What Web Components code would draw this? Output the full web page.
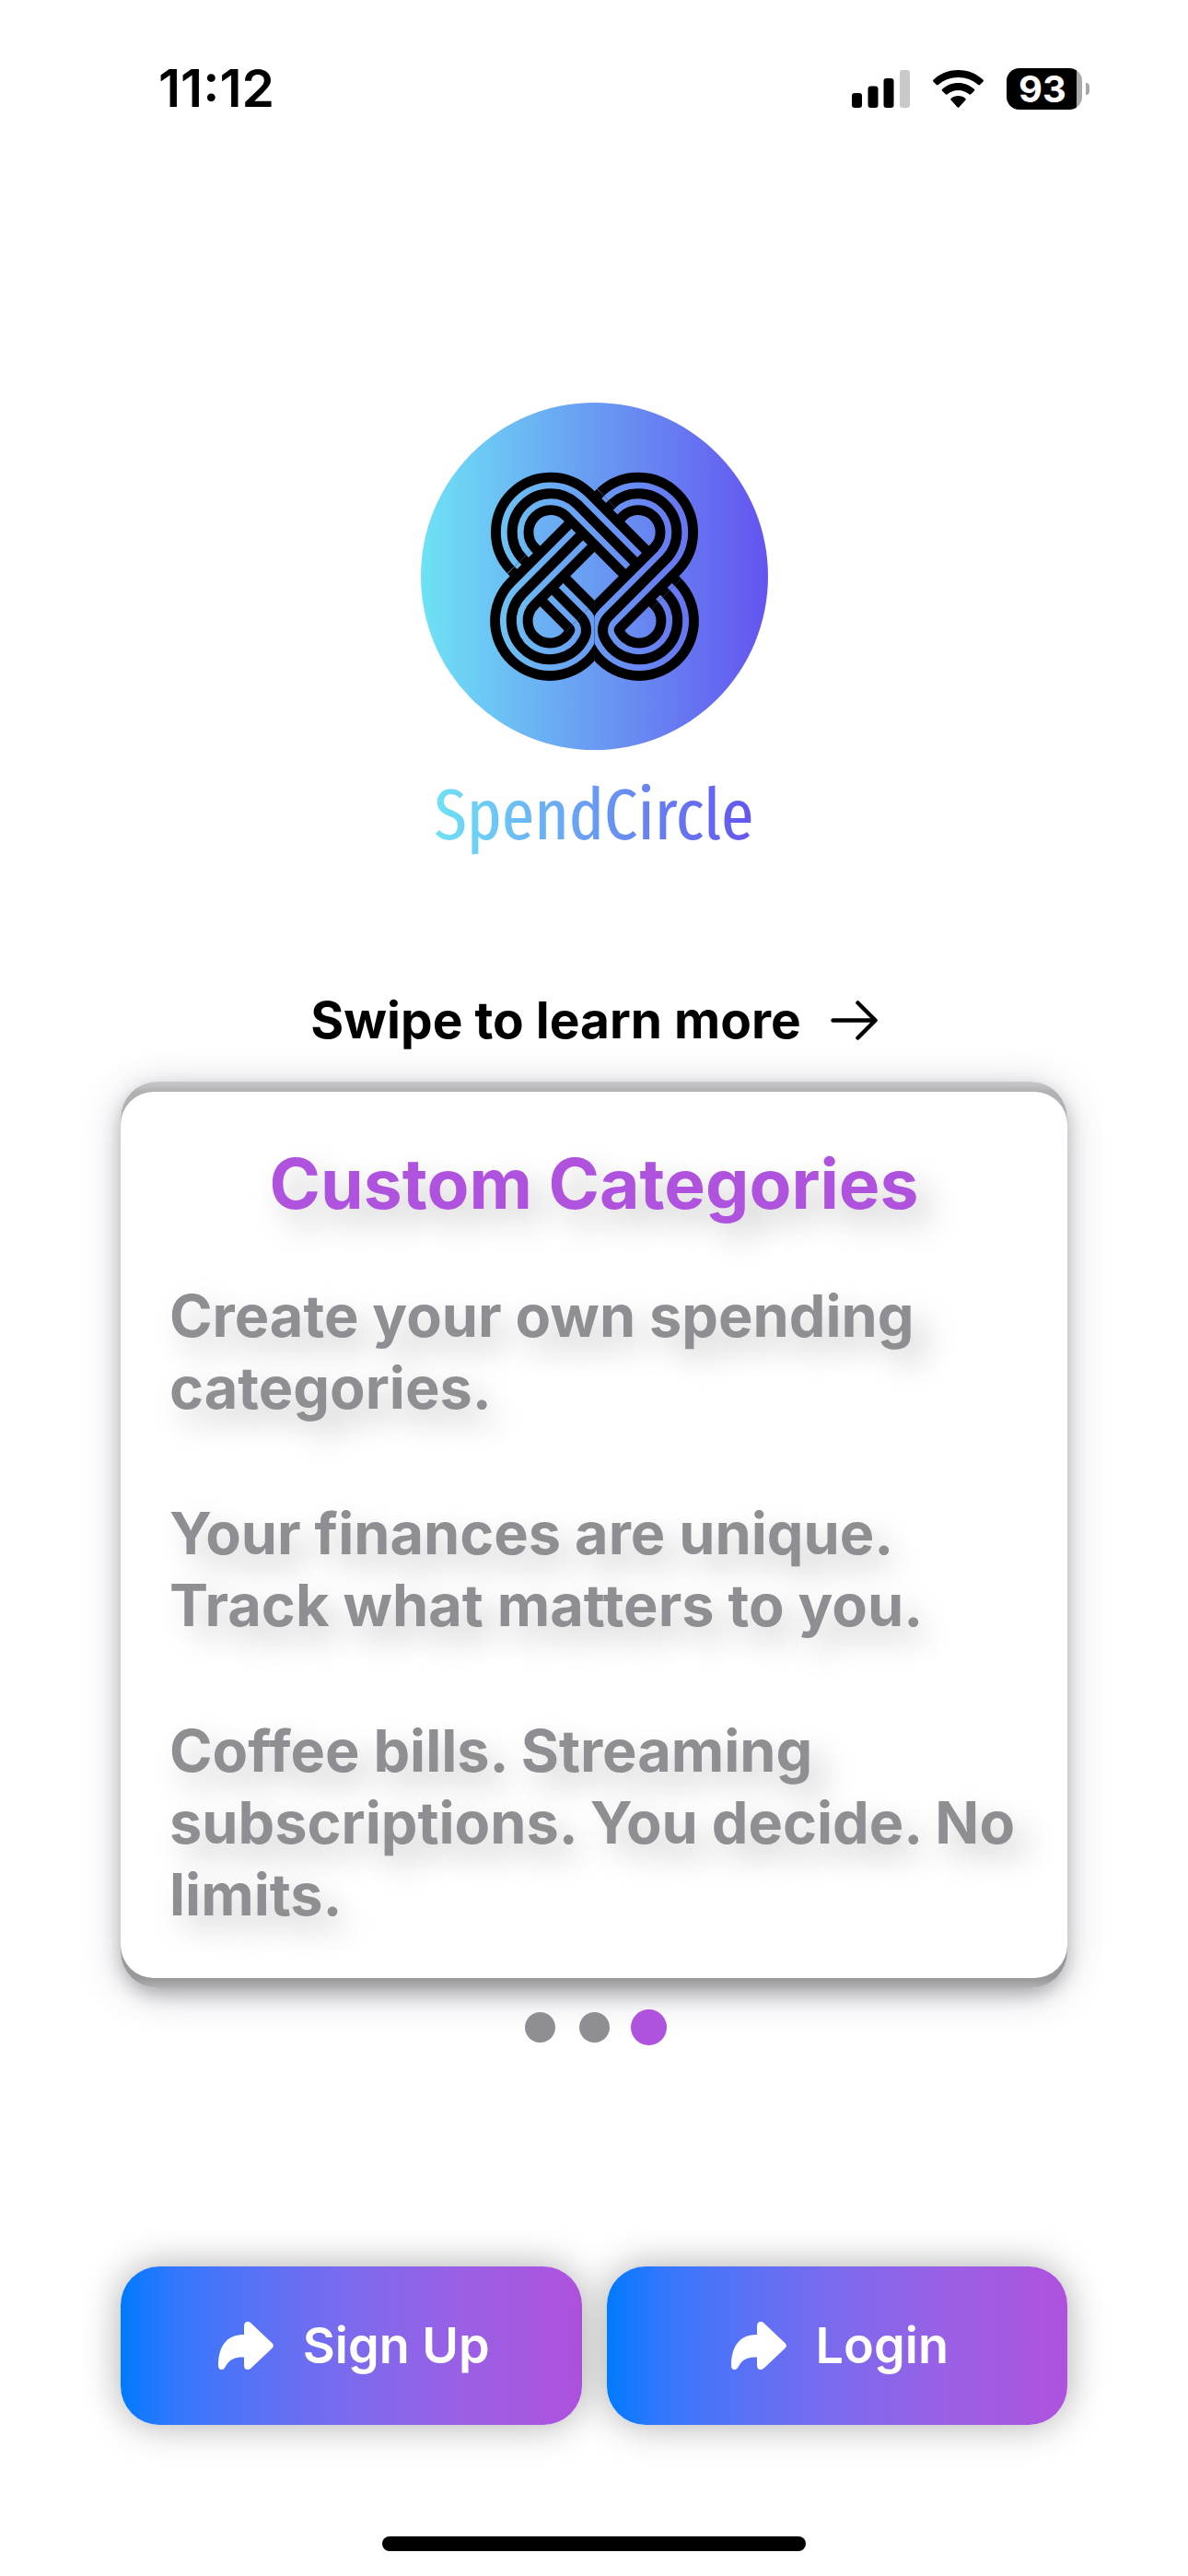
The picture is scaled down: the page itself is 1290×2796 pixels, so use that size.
<!DOCTYPE html>
<html lang="en">
<head>
<meta charset="utf-8">
<meta name="viewport" content="width=device-width, initial-scale=1">
<title>SpendCircle</title>
<style>
  body {
    margin: 0;
    background: #fff;
    color: #000;
    font-family: Inter, "Liberation Sans", sans-serif;
  }
</style>
</head>
<body>
<welcome-screen></welcome-screen>

<script>
class StatusBar extends HTMLElement {
  constructor() {
    super();
    this.shadowDom = this.attachShadow({ mode: 'open' });
  }

  connectedCallback() {
    this.shadowDom.innerHTML = `
      <style>
        :host {
          display: flex;
          align-items: center;
          justify-content: space-between;
          padding: 64px 107px 0 172px;
          font-size: 57px;
          line-height: 64px;
          font-weight: 600;
        }
        .icons {
          display: flex;
          align-items: center;
          gap: 25px;
        }
        svg { display: block; }
        .battery {
          display: flex;
          align-items: center;
          gap: 4px;
        }
        .level {
          box-sizing: border-box;
          width: 82px;
          height: 45px;
          padding-right: 4px;
          border-radius: 14px;
          background: linear-gradient(to right, #000 93%, #a8a8a8 93%);
          color: #fff;
          font-size: 40px;
          line-height: 46px;
          font-weight: 700;
          text-align: center;
        }
        .nub {
          width: 4px;
          height: 13px;
          border-radius: 0 6px 6px 0;
          background: #a8a8a8;
        }
      </style>
      <time>${this.getAttribute('time')}</time>
      <div class="icons">
        <svg width="63" height="41" viewBox="0 0 63 41" aria-label="Signal">
          <rect y="25" width="11" height="16" rx="3"/>
          <rect x="17.500" y="17.500" width="11" height="23.500" rx="3"/>
          <rect x="34.500" y="9" width="11" height="32" rx="3"/>
          <rect x="52" width="11" height="41" rx="3" fill="#c9c9c9"/>
        </svg>
        <svg width="55" height="41" viewBox="0 0 55 41" aria-label="Wi-Fi">
          <path d="M27.500 0C38 0 47.500 4 54.400 10.600c.7.700.7 1.400 0 2.100l-3.300 3.400c-.6.600-1.300.6-2 0C43.300 10.800 35.700 8 27.500 8S11.700 10.800 5.900 16.100c-.7.600-1.400.6-2 0L.6 12.700c-.7-.7-.7-1.400 0-2.100C7.500 4 17 0 27.500 0z"/>
          <path d="M27.500 14c6.600 0 12.700 2.500 17.300 6.700.7.600.7 1.300 0 2l-3.500 3.500c-.6.600-1.300.6-2 .1C36.100 23.600 32 22 27.500 22s-8.600 1.600-11.800 4.300c-.7.500-1.400.5-2-.1l-3.500-3.500c-.7-.7-.7-1.400 0-2C14.800 16.500 20.900 14 27.500 14z"/>
          <path d="M27.500 28c2.900 0 5.600 1 7.700 2.700.7.600.7 1.300.1 2l-6.800 7.500c-.6.700-1.400.7-2 0l-6.800-7.500c-.6-.7-.6-1.400.1-2C21.900 29 24.600 28 27.500 28z"/>
        </svg>
        <div class="battery">
          <div class="level">${this.getAttribute('battery')}</div>
          <div class="nub"></div>
        </div>
      </div>
    `;
  }
}

customElements.define('status-bar', StatusBar);

class BrandLogo extends HTMLElement {
  constructor() {
    super();
    this.shadowDom = this.attachShadow({ mode: 'open' });
  }

  // one ribbon: three nested strokes leave two thin coloured stripes
  ribbon(d, clip) {
    return `
      <g fill="none" ${clip ? `clip-path="url(#${clip})"` : ''}>
        <path d="${d}" stroke="#000" stroke-width="139"/>
        <path d="${d}" stroke="url(#fade)" stroke-width="74"/>
        <path d="${d}" stroke="#000" stroke-width="33"/>
      </g>
    `;
  }

  connectedCallback() {
    this.shadowDom.innerHTML = `
      <style>
        :host {
          display: flex;
          flex-direction: column;
          align-items: center;
          gap: 25px;
        }
        svg {
          display: block;
          width: 377px;
          height: 377px;
        }
        .name {
          background: linear-gradient(to right, #6ee2f5, #6454f0);
          -webkit-background-clip: text;
          background-clip: text;
          color: transparent;
          font-family: "Fira Sans Extra Condensed", "Fira Sans Condensed", "Open Sans Condensed", sans-serif;
          font-size: 78px;
          line-height: 92px;
          font-weight: 400;
        }
      </style>
      <svg viewBox="50 53 1130 1130" aria-hidden="true">
        <defs>
          <linearGradient id="fade" gradientUnits="userSpaceOnUse" x1="50" y1="0" x2="1180" y2="0">
            <stop offset="0" stop-color="#6ee2f5"/>
            <stop offset="1" stop-color="#6454f0"/>
          </linearGradient>
          <clipPath id="left"><path d="M0 0H1200V600H616V1200H0z"/></clipPath>
          <clipPath id="right"><path d="M0 0H1200V1200H615V600H0z"/></clipPath>
        </defs>
        <circle cx="615" cy="618" r="565" fill="url(#fade)"/>
        ${this.ribbon('M569.800 749.200L381.300 560.700', 'left')}
        ${this.ribbon('M672 383L381.300 674.300A125.500 125.500 0 1 0 580.700 822.300A62 62 0 0 0 569.800 749.200', 'left')}
        ${this.ribbon('M381.300 560.700A125.500 125.500 0 0 1 558.700 383.300L848.700 674.300')}
        ${this.ribbon('M671.300 383.300A125.500 125.500 0 0 1 848.700 560.700L660.200 749.200A62 62 0 0 0 649.300 822.300A125.500 125.500 0 1 0 848.700 674.300', 'right')}
      </svg>
      <div class="name"><slot></slot></div>
    `;
  }
}

customElements.define('brand-logo', BrandLogo);

class SwipeHint extends HTMLElement {
  constructor() {
    super();
    this.shadowDom = this.attachShadow({ mode: 'open' });
  }

  connectedCallback() {
    this.shadowDom.innerHTML = `
      <style>
        :host {
          display: flex;
          align-items: center;
          justify-content: center;
          gap: 32px;
          font-size: 55px;
          line-height: 64px;
          font-weight: 700;
        }
        svg { display: block; }
      </style>
      <span><slot></slot></span>
      <svg width="51" height="43" viewBox="0 0 51 43" fill="none" stroke="#000" stroke-width="4.500" stroke-linecap="round" stroke-linejoin="round" aria-hidden="true">
        <path d="M2.500 21.500H48M29.500 2.500L48.500 21.500L29.500 40.500"/>
      </svg>
    `;
  }
}

customElements.define('swipe-hint', SwipeHint);

class FeatureCard extends HTMLElement {
  constructor() {
    super();
    this.shadowDom = this.attachShadow({ mode: 'open' });
  }

  connectedCallback() {
    this.shadowDom.innerHTML = `
      <style>
        :host {
          display: block;
          padding: 11px 0;
          border-radius: 40px;
          background: linear-gradient(to bottom, #c9c9cb, #b1b1b3 11px, #b1b1b3 50%, #98989b calc(100% - 11px), #b3b3b5);
          box-shadow: 0 8px 20px -2px rgba(0, 0, 0, 0.26), 0 6px 44px rgba(60, 60, 90, 0.24);
        }
        article {
          padding: 53px 48px 52px;
          border-radius: 36px;
          background: #fff;
          text-shadow: 14px 16px 34px rgba(0, 0, 0, 0.22);
          font-weight: 700;
        }
        h1 {
          margin: 0 0 58px;
          color: #af52de;
          font-size: 75px;
          line-height: 93px;
          text-align: center;
        }
        .text {
          display: flex;
          flex-direction: column;
          gap: 80px;
          padding-left: 5px;
          color: #8e8e93;
          font-size: 63px;
          line-height: 78px;
        }
        ::slotted(p) { margin: 0; }
      </style>
      <article>
        <h1>${this.getAttribute('heading')}</h1>
        <div class="text"><slot></slot></div>
      </article>
    `;
  }
}

customElements.define('feature-card', FeatureCard);

class PageDots extends HTMLElement {
  constructor() {
    super();
    this.shadowDom = this.attachShadow({ mode: 'open' });
  }

  connectedCallback() {
    const count = Number(this.getAttribute('count'));
    const active = Number(this.getAttribute('active'));
    this.shadowDom.innerHTML = `
      <style>
        :host {
          display: flex;
          justify-content: center;
          gap: 20px;
        }
        button {
          display: grid;
          place-items: center;
          width: 39px;
          height: 39px;
          padding: 0;
          border: 0;
          background: none;
        }
        button::before {
          content: "";
          width: 33px;
          height: 33px;
          border-radius: 50%;
          background: #8e8e93;
        }
        button[aria-current]::before {
          width: 39px;
          height: 39px;
          background: #af52de;
        }
      </style>
    `;
    for (let i = 1; i <= count; i++) {
      const dot = document.createElement('button');
      dot.type = 'button';
      dot.setAttribute('aria-label', `Page ${i}`);
      if (i === active) dot.setAttribute('aria-current', 'true');
      this.shadowDom.appendChild(dot);
    }
  }
}

customElements.define('page-dots', PageDots);

class ActionButton extends HTMLElement {
  constructor() {
    super();
    this.shadowDom = this.attachShadow({ mode: 'open' });
  }

  connectedCallback() {
    this.shadowDom.innerHTML = `
      <style>
        :host { display: block; }
        button {
          display: flex;
          align-items: center;
          justify-content: center;
          gap: 32px;
          width: 100%;
          padding: 54px 18px 54px 24px;
          border: 0;
          border-radius: 42px;
          background: linear-gradient(to right, #007aff, #3477fd 12%, #5572f7 28%, #7d6aed 50%, #9a60e5 74%, #af52de);
          box-shadow: 0 0 42px rgba(0, 0, 0, 0.33);
          color: #fff;
          font: 600 54px/64px Inter, "Liberation Sans", sans-serif;
        }
        svg { display: block; }
      </style>
      <button type="button">
        <svg width="60" height="52" viewBox="0 0 60 52" fill="#fff" aria-hidden="true">
          <path d="M28 14V5C28 1.500 29.500 0 32 0c1.500 0 2.700.6 4 2L58 22.800c2.500 2.300 2.500 4.100 0 6.400L36 50c-1.300 1.300-2.500 2-4 2-2.500 0-4-1.500-4-4.500v-9C17 38.500 12 41 8 48.500 6.600 51 5.500 52 3.600 52 1.400 52 0 50.500 0 47.500 0 28 8 14 28 14z"/>
        </svg>
        <span><slot></slot></span>
      </button>
    `;
  }
}

customElements.define('action-button', ActionButton);

class WelcomeScreen extends HTMLElement {
  constructor() {
    super();
    this.shadowDom = this.attachShadow({ mode: 'open' });
  }

  connectedCallback() {
    this.shadowDom.innerHTML = `
      <style>
        :host {
          display: flex;
          flex-direction: column;
          min-height: 100vh;
        }
        main { padding: 309px 131px 0; }
        swipe-hint { margin: 144px 0 35px; }
        page-dots { margin: 23px 0 240px; }
        .actions {
          display: grid;
          grid-template-columns: 1fr 1fr;
          gap: 27px;
        }
        .home {
          width: 460px;
          height: 16px;
          margin: auto auto 27px;
          border-radius: 8px;
          background: #000;
        }
      </style>
      <status-bar time="11:12" battery="93"></status-bar>
      <main>
        <brand-logo>SpendCircle</brand-logo>
        <swipe-hint>Swipe to learn more</swipe-hint>
        <feature-card heading="Custom Categories">
          <p>Create your own spending categories.</p>
          <p>Your finances are unique. Track what matters to you.</p>
          <p>Coffee bills. Streaming subscriptions. You decide. No limits.</p>
        </feature-card>
        <page-dots count="3" active="3"></page-dots>
        <div class="actions">
          <action-button>Sign Up</action-button>
          <action-button>Login</action-button>
        </div>
      </main>
      <div class="home"></div>
    `;
  }
}

customElements.define('welcome-screen', WelcomeScreen);
</script>
</body>
</html>
